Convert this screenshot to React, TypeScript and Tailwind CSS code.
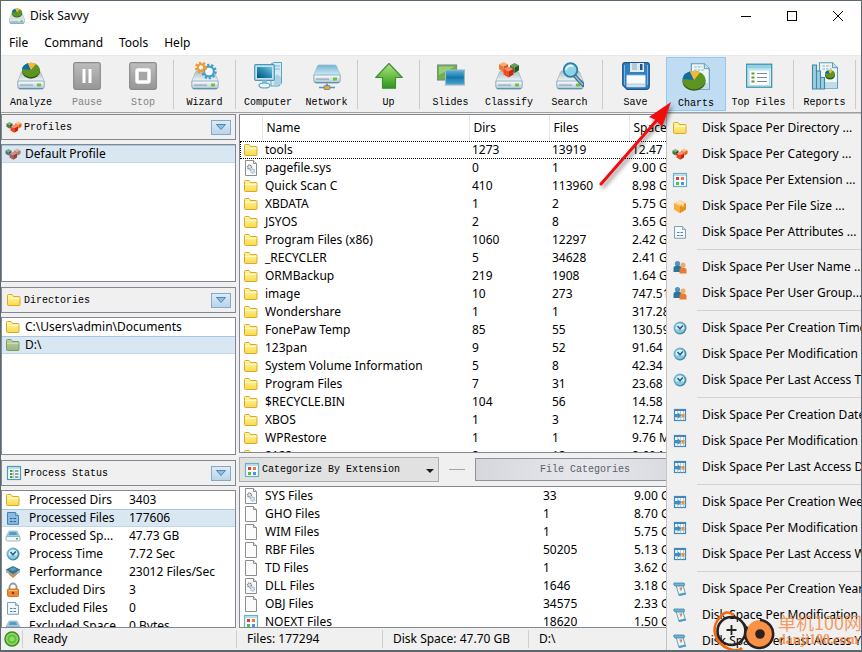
import { useId } from "react";
import type { ComponentType, ReactNode } from "react";

type IconProps = { size?: number };

function Art({ size = 28, box = 28, children }: { size?: number; box?: number; children: ReactNode }) {
  return (
    <svg width={size} height={size} viewBox={`0 0 ${box} ${box}`} className="block shrink-0" aria-hidden="true">
      {children}
    </svg>
  );
}

/* ---------- toolbar icons ---------- */

function DriveShape({ blue = false }: { blue?: boolean }) {
  const id = useId();
  return (
    <g>
      <defs>
        <linearGradient id={id + "t"} x1="0" y1="0" x2="0" y2="1">
          <stop offset="0" stopColor={blue ? "#6fb6d3" : "#a9bcc6"} />
          <stop offset="1" stopColor={blue ? "#d9f0fa" : "#f7fafc"} />
        </linearGradient>
        <linearGradient id={id + "f"} x1="0" y1="0" x2="0" y2="1">
          <stop offset="0" stopColor="#ffffff" />
          <stop offset="1" stopColor="#a9c3d1" />
        </linearGradient>
      </defs>
      <path d="M6 9h16q1 0 1.500 1L27.500 20h-27L4.500 10q.5-1 1.500-1z" fill={`url(#${id}t)`} stroke="#9db4c0" strokeWidth=".7" />
      <path d="M.8 20q0-1 1-1h24.400q1 0 1 1v4.500q0 2.500-2.500 2.500H3.300Q.8 27 .8 24.500z" fill={`url(#${id}f)`} stroke="#7ba0b4" strokeWidth=".8" />
      <rect x="3" y="22.500" width="13" height="1.200" fill="#8fa9b7" />
      <rect x="20" y="21.500" width="4" height="3" rx=".5" fill="#6cc23c" />
      <path d="M2 26.600h24" stroke="#4f8cab" strokeWidth=".9" />
    </g>
  );
}

function Pie({ cx, cy, r }: { cx: number; cy: number; r: number }) {
  const ry = r * 0.8;
  return (
    <g>
      <ellipse cx={cx} cy={cy + 1.500} rx={r} ry={ry} fill="#2f5c0c" />
      <ellipse cx={cx} cy={cy} rx={r} ry={ry} fill="#5d9423" />
      <path d={`M${cx} ${cy}L${cx - r} ${cy - 1}A${r} ${ry} 0 0 1 ${cx - r * 0.35} ${cy - ry * 0.93}z`} fill="#0f6ea8" />
      <path d={`M${cx} ${cy}L${cx - r * 0.35} ${cy - ry * 0.93}A${r} ${ry} 0 0 1 ${cx + r * 0.55} ${cy - ry * 0.83}z`} fill="#f4b73a" />
    </g>
  );
}

function AnalyzeIcon({ size }: IconProps) {
  return (
    <Art size={size}>
      <DriveShape />
      <Pie cx={14} cy={8} r={9} />
    </Art>
  );
}

function GreyTile({ children }: { children: ReactNode }) {
  const id = useId();
  return (
    <Art>
      <defs>
        <linearGradient id={id} x1="0" y1="0" x2="0" y2="1">
          <stop offset="0" stopColor="#bdbdbd" />
          <stop offset="1" stopColor="#969696" />
        </linearGradient>
      </defs>
      <rect x=".7" y=".7" width="26.600" height="26.600" rx="2" fill={`url(#${id})`} stroke="#8a8a8a" strokeWidth="1.200" />
      {children}
    </Art>
  );
}

const PauseIcon = () => (
  <GreyTile>
    <path d="M11 7v14M17 7v14" stroke="#fff" strokeWidth="3" />
  </GreyTile>
);

const StopIcon = () => (
  <GreyTile>
    <rect x="8" y="8" width="12" height="12" rx="1" fill="#a5a5a5" stroke="#fff" strokeWidth="3.400" />
  </GreyTile>
);

function Gear({ cx, cy, r, color }: { cx: number; cy: number; r: number; color: string }) {
  return (
    <g>
      <circle cx={cx} cy={cy} r={r} fill="none" stroke={color} strokeWidth="2.600" strokeDasharray="2.200 1.800" />
      <circle cx={cx} cy={cy} r={r - 1.600} fill="none" stroke={color} strokeWidth="2.200" />
      <circle cx={cx} cy={cy} r={r - 2.800} fill="#f5fbff" />
    </g>
  );
}

const WizardIcon = () => (
  <Art>
    <DriveShape />
    <Gear cx={18} cy={9.500} r={6.500} color="#3fa0d0" />
    <Gear cx={10} cy={5.500} r={4.800} color="#ef9a33" />
  </Art>
);

function ComputerIcon() {
  const id = useId();
  return (
    <Art>
      <defs>
        <linearGradient id={id} x1="0" y1="1" x2="1" y2="0">
          <stop offset="0" stopColor="#06507c" />
          <stop offset=".55" stopColor="#2c92b8" />
          <stop offset="1" stopColor="#74c7de" />
        </linearGradient>
      </defs>
      <path d="M17 2l3-1.500h7.500v21L25 24h-8z" fill="#d5ecf6" stroke="#5fa3c0" strokeWidth="1" />
      <path d="M20 4h6M20 7h6" stroke="#7cb6ce" strokeWidth="1.200" />
      <path d="M20 16l3-4 4 3v8h-7z" fill="#a9d3e4" />
      <rect x=".7" y="2.700" width="19.600" height="15.600" rx="1" fill="#c4e4f1" stroke="#4b95b5" strokeWidth="1.200" />
      <rect x="3" y="5" width="15" height="11" fill={`url(#${id})`} />
      <path d="M8 18.500h5V22H8z" fill="#8fc3d9" />
      <ellipse cx="10.500" cy="23.500" rx="5.500" ry="2.500" fill="#e3f4fb" stroke="#5fa3c0" strokeWidth="1.200" />
    </Art>
  );
}

const NetworkIcon = () => (
  <Art>
    <g transform="translate(0 -6)">
      <DriveShape blue />
    </g>
    <path d="M14 21.500v4M6 25.500h16" stroke="#5795b4" strokeWidth="1.600" />
    <rect x="11" y="23.500" width="6" height="4" rx="1" fill="#f2a13b" stroke="#4c87a5" strokeWidth=".8" />
  </Art>
);

function UpIcon() {
  const id = useId();
  return (
    <Art>
      <defs>
        <linearGradient id={id} x1="0" y1="0" x2="0" y2="1">
          <stop offset="0" stopColor="#b4e08c" />
          <stop offset=".6" stopColor="#5fb83c" />
          <stop offset="1" stopColor="#2f9420" />
        </linearGradient>
      </defs>
      <path d="M14 1.500L27.300 15.500h-6.800v10.800h-13V15.500H.7z" fill={`url(#${id})`} stroke="#3b8f2b" strokeWidth="1.100" strokeLinejoin="round" />
    </Art>
  );
}

function SlidesIcon() {
  const id = useId();
  return (
    <Art>
      <defs>
        <linearGradient id={id} x1="0" y1="0" x2="0" y2="1">
          <stop offset="0" stopColor="#5fb4da" />
          <stop offset=".5" stopColor="#1677ac" />
          <stop offset="1" stopColor="#4aa8d6" />
        </linearGradient>
      </defs>
      <rect x=".5" y="3" width="19" height="15" fill="#6bb148" stroke="#7d8d87" strokeWidth="1.200" />
      <path d="M2 4.500h16L2 13z" fill="#97cf72" />
      <rect x="8.500" y="8" width="19" height="15" fill={`url(#${id})`} stroke="#9db9c6" strokeWidth="1.200" />
    </Art>
  );
}

function Cube({ x, y, s, top, left, right }: { x: number; y: number; s: number; top: string; left: string; right: string }) {
  return (
    <g transform={`translate(${x} ${y}) scale(${s})`}>
      <path d="M0 2.500L5 0l5 2.500-5 2.500z" fill={top} />
      <path d="M0 2.500L5 5v6L0 8z" fill={left} />
      <path d="M10 2.500L5 5v6l5-3z" fill={right} />
    </g>
  );
}

const ClassifyIcon = () => (
  <Art>
    <DriveShape />
    <Cube x={4} y={0} s={0.900} top="#f9b273" left="#ef7a31" right="#d85a18" />
    <Cube x={15} y={1} s={0.900} top="#6a9c58" left="#3f7a33" right="#255a1d" />
    <Cube x={8.500} y={4.500} s={1} top="#ff8668" left="#f24a25" right="#c92a0c" />
  </Art>
);

const SearchIcon = () => (
  <Art>
    <DriveShape />
    <path d="M19 14l8 9" stroke="#3f6f8a" strokeWidth="4" strokeLinecap="round" />
    <path d="M19.500 14.500l7 8" stroke="#8fbdd4" strokeWidth="1.600" strokeLinecap="round" />
    <circle cx="14.500" cy="8" r="6.800" fill="#8fd3ea" stroke="#2f7fa3" strokeWidth="1.800" />
    <path d="M10 8a4.500 4.500 0 0 1 7-3.500" stroke="#e8f8fd" strokeWidth="1.800" fill="none" />
  </Art>
);

const SaveIcon = () => (
  <Art>
    <path d="M3 .7h22q2.300 0 2.300 2.300v21q0 3.300-3.300 3.300H5L.7 23V3Q.7.7 3 .7z" fill="#2f7fc1" stroke="#1c568c" strokeWidth="1.200" />
    <path d="M2.500 3v20M25.500 3v20" stroke="#7db5e0" strokeWidth="1" />
    <rect x="8" y="1" width="14" height="9" fill="#dceaf2" />
    <rect x="10" y="1" width="5" height="7" fill="#b9c9d3" />
    <rect x="18" y="2" width="2.500" height="6" fill="#1f5486" />
    <rect x="4.500" y="13" width="19" height="12" rx="1" fill="#f7fafc" stroke="#90b4d0" strokeWidth=".8" />
    <path d="M5 22.500h18" stroke="#b9d0e0" strokeWidth="2" />
  </Art>
);

const SheetPart = ({ x }: { x: number }) => (
  <g>
    <path d={`M${x} .7h13l5 5v20.600h-18z`} fill="#eef7fb" stroke="#5f9cb5" strokeWidth="1.100" />
    <path d={`M${x + 13} .7v5h5`} fill="#c4e1ec" stroke="#5f9cb5" strokeWidth="1" />
    <path d={`M${x + 3} 4h8M${x + 3} 7h10`} stroke="#7fb2c7" strokeWidth="1.200" strokeDasharray="2.500 1" />
    <rect x={x + 0.600} y="20" width="16.800" height="5.600" fill="#c0dce8" />
  </g>
);

const ChartsIcon = () => (
  <Art>
    <SheetPart x={9.300} />
    <Pie cx={12} cy={17} r={11.500} />
  </Art>
);

const TopFilesIcon = () => (
  <Art>
    <rect x="1.700" y="2.200" width="25" height="23" fill="#d8eef5" stroke="#2f8ba8" strokeWidth="1.200" />
    <rect x="2.500" y="3" width="23.400" height="3.500" fill="#8ed2e3" />
    <rect x="4" y="8" width="20.500" height="15.500" fill="#fbfdfe" stroke="#a9d3df" strokeWidth=".8" />
    <path d="M6.500 11.500h3M6.500 15.500h3M6.500 19.500h3" stroke="#5c9e2c" strokeWidth="2.200" />
    <path d="M12 11.500h10M12 15.500h10M12 19.500h10" stroke="#7a8a92" strokeWidth="1.200" />
  </Art>
);

const ReportsIcon = () => (
  <Art>
    <SheetPart x={8.500} />
    <Pie cx={19} cy={12} r={5} />
    <path d="M1.500 3h4v24h-4zM5.500 9h4v18h-4zM9.500 15.500h4V27h-4z" fill="#9ccde0" stroke="#3f88a6" strokeWidth="1.100" />
  </Art>
);

/* ---------- 16px icons ---------- */

function FolderIcon({ green = false }: { green?: boolean }) {
  const id = useId();
  return (
    <Art size={16} box={16}>
      <defs>
        <linearGradient id={id} x1="0" y1="0" x2="0" y2="1">
          <stop offset="0" stopColor={green ? "#c5d3a4" : "#fff7a8"} />
          <stop offset="1" stopColor={green ? "#94b283" : "#fbd94c"} />
        </linearGradient>
      </defs>
      <path d="M1.500 12.500v-9q0-1 1-1H6l1.500 2H13q1 0 1 1v7q0 1-1 1H2.500q-1 0-1-1z" fill={`url(#${id})`} stroke={green ? "#819a62" : "#d9a92c"} strokeWidth="1" />
      <path d="M2 6.500h11.500" stroke={green ? "#d2debb" : "#fffbd8"} strokeWidth=".9" />
    </Art>
  );
}
const GreenFolderIcon = () => <FolderIcon green />;

const CubesIcon = () => (
  <Art size={16} box={16}>
    <Cube x={0.500} y={3} s={0.600} top="#83b179" left="#3d7a3a" right="#1f5620" />
    <Cube x={9} y={2.500} s={0.650} top="#ffbf8a" left="#f28a3e" right="#e0651c" />
    <Cube x={4.500} y={5.500} s={0.750} top="#ff8e71" left="#ee4423" right="#c42508" />
  </Art>
);

const MutedCubesIcon = () => (
  <Art size={16} box={16}>
    <Cube x={0.500} y={3} s={0.600} top="#83a394" left="#4b7c6c" right="#355f5e" />
    <Cube x={9} y={2.500} s={0.650} top="#d9b6a6" left="#b78f80" right="#a0766f" />
    <Cube x={4.500} y={5.500} s={0.750} top="#d58f8b" left="#b65d58" right="#8f403f" />
  </Art>
);

const BlankPageIcon = () => (
  <Art size={16} box={16}>
    <path d="M2.500.5h8l3 3v12h-11z" fill="#fbfbfb" stroke="#8d8d8d" />
    <path d="M10.500.5v3h3" fill="#e2e2e2" stroke="#8d8d8d" />
  </Art>
);

const SystemPageIcon = () => (
  <Art size={16} box={16}>
    <path d="M2.500.5h8l3 3v12h-11z" fill="#fbfbfb" stroke="#8d8d8d" />
    <path d="M10.500.5v3h3" fill="#e2e2e2" stroke="#8d8d8d" />
    <circle cx="6.500" cy="7" r="2" fill="#dfe3e6" stroke="#7b858c" strokeWidth="1.300" strokeDasharray="1.200 .6" />
    <circle cx="9.500" cy="11" r="1.900" fill="#e5f2fa" stroke="#86aecb" strokeWidth="1.300" strokeDasharray="1.200 .6" />
  </Art>
);

const GridIcon = () => (
  <Art size={16} box={16}>
    <rect x="1.500" y="1.500" width="13" height="13" fill="#f6fbfd" stroke="#6bb0c4" strokeWidth="1.200" />
    <path d="M2 3h12" stroke="#a5d5e2" strokeWidth="1.500" />
    <path d="M4 5h3v3H4z" fill="#dd3c3c" />
    <path d="M9 5h3v3H9z" fill="#ef7640" />
    <path d="M4 10h3v3H4z" fill="#54c13b" />
    <path d="M9 10h3v3H9z" fill="#4d91e8" />
  </Art>
);

const StatusListIcon = () => (
  <Art size={16} box={16}>
    <rect x="1.500" y="1.500" width="13" height="13" fill="#f6fbfd" stroke="#4f9db2" strokeWidth="1.200" />
    <path d="M2 3h12" stroke="#a5d5e2" strokeWidth="1.500" />
    <path d="M4 6h2.500M4 9h2.500M4 12h2.500" stroke="#4e9c3c" strokeWidth="1.800" />
    <path d="M9 6h3.500M9 9h3.500M9 12h3.500" stroke="#8fa3ab" strokeWidth="1.800" />
    <path d="M7.700 4.500v9" stroke="#7fb8c9" strokeWidth=".8" />
  </Art>
);

function DocIcon({ selected = false }: { selected?: boolean }) {
  return (
    <Art size={16} box={16}>
      <path d="M2.500 2.500h8l3 3v8.800h-11z" fill={selected ? "#8dbbe0" : "#f1f7fa"} stroke={selected ? "#3f80b5" : "#7fa2b3"} />
      <path d="M10.500 2.500v3h3" fill="#b3d2e2" stroke={selected ? "#3f80b5" : "#7fa2b3"} strokeWidth=".8" />
      <path d="M5 8.500h2.500M8.500 8.500H11M5 11.500h2.500M8.500 11.500H11" stroke={selected ? "#2d6496" : "#5f8092"} strokeWidth="1" />
    </Art>
  );
}
const SelectedDocIcon = () => <DocIcon selected />;

const SmallDriveIcon = () => (
  <Art size={16} box={16}>
    <path d="M4 3h8l3 6H1z" fill="#a3cfe0" stroke="#8db3c4" strokeWidth=".7" />
    <path d="M5 4h6l1.500 3h-9z" fill="#4f9fbe" />
    <rect x="1" y="8.500" width="14" height="4.500" rx="1.500" fill="#eff7fa" stroke="#88a9b8" strokeWidth=".8" />
    <path d="M11 10.800h2" stroke="#57b03a" strokeWidth="1.400" />
  </Art>
);

function ClockIcon() {
  const id = useId();
  return (
    <Art size={16} box={16}>
      <defs>
        <linearGradient id={id} x1="0" y1="0" x2="1" y2="1">
          <stop offset="0" stopColor="#8cc9de" />
          <stop offset="1" stopColor="#2c789c" />
        </linearGradient>
      </defs>
      <circle cx="8" cy="8" r="6.500" fill={`url(#${id})`} />
      <circle cx="8" cy="8" r="4.600" fill="#d9f1f8" />
      <path d="M3.600 9.500a4.600 4.600 0 0 0 8.800 0z" fill="#86c8de" />
      <path d="M5.500 6L8 8.800 10.800 5.500" stroke="#205f86" strokeWidth="1.500" fill="none" />
    </Art>
  );
}

const PerformanceIcon = () => (
  <Art size={16} box={16}>
    <path d="M4 7h8v3.500L8 14l-4-3.500z" fill="#ea7b24" />
    <path d="M1 6.500l7 4 7-4v1.800l-7 4-7-4z" fill="#93a4ac" />
    <path d="M8 2l7.500 3.800L8 10 .5 5.800z" fill="#2f7592" />
    <path d="M8 3.200l4 2-4 2-4-2z" fill="#5f9fb8" />
  </Art>
);

const LockIcon = () => (
  <Art size={16} box={16}>
    <path d="M4.500 7.500V5a3.500 3.500 0 0 1 7 0v2.500" fill="none" stroke="#8e9aa0" strokeWidth="1.800" />
    <rect x="2.500" y="7" width="11" height="7.500" rx="1" fill="#f28a2c" stroke="#c9610f" strokeWidth=".8" />
    <path d="M3.500 8.500h9" stroke="#fbc07e" />
    <circle cx="8" cy="11" r="1.300" fill="#7a3a08" />
  </Art>
);

const BoxIcon = () => (
  <Art size={16} box={16}>
    <Cube x={2} y={2} s={1.200} top="#fdd48a" left="#f9ae3c" right="#e98f1b" />
    <path d="M5 3.300l6 3v2.500" stroke="#fff0cf" strokeWidth="1.200" fill="none" />
  </Art>
);

const UsersIcon = () => (
  <Art size={16} box={16}>
    <circle cx="5.500" cy="4.500" r="2.600" fill="#4f94ba" />
    <path d="M1.500 13V9q0-2.500 4-2.500T9.500 9v4z" fill="#2e759d" />
    <circle cx="11" cy="6" r="2.500" fill="#f6a76a" />
    <path d="M7.500 14.500V11q0-2.500 3.500-2.500t3.500 2.500v3.500z" fill="#ea7a30" />
  </Art>
);

const CalendarIcon = () => (
  <Art size={16} box={16}>
    <rect x="2.500" y="2.500" width="11" height="11" fill="#f7fafc" stroke="#3d88bd" strokeWidth="1.200" />
    <path d="M2.500 3h11v1h-11z" fill="#3d88bd" />
    <path d="M5.500 4v9.500M8.500 4v9.500M11.500 4v9.500M2.500 7.500h11M2.500 10.500h11" stroke="#9fb8c6" strokeWidth=".7" />
    <path d="M3 7h3V5.500L9.500 8.500 6 11.500V10H3z" fill="#3d8fc4" />
    <rect x="9.500" y="7" width="3" height="3" fill="#f5922f" />
  </Art>
);

const ScrollIcon = () => (
  <Art size={16} box={16}>
    <path d="M4 4h7l2.500 9-6.500 1.500z" fill="#eaf4f8" stroke="#6ba3ba" strokeWidth="1" />
    <path d="M2 2h10q1.200 1.500 0 3H3Q1 4 2 2z" fill="#6db4cf" stroke="#3b87a8" strokeWidth=".8" />
    <path d="M6.500 13l6.500-1.500 1.300 2-7 1.500z" fill="#4f9fbe" />
    <path d="M7.500 7h2l-.8 2.500" stroke="#dc6a2a" strokeWidth="1.200" fill="none" />
  </Art>
);

/* ---------- data ---------- */

type Tool = { label: string; icon: ComponentType; width: string; disabled?: boolean; active?: boolean };

const toolGroups: Tool[][] = [
  [
    { label: "Analyze", icon: AnalyzeIcon, width: "w-14" },
    { label: "Pause", icon: PauseIcon, width: "w-14", disabled: true },
    { label: "Stop", icon: StopIcon, width: "w-14", disabled: true },
  ],
  [{ label: "Wizard", icon: WizardIcon, width: "w-[57px]" }],
  [
    { label: "Computer", icon: ComputerIcon, width: "w-[60px]" },
    { label: "Network", icon: NetworkIcon, width: "w-[57px]" },
  ],
  [{ label: "Up", icon: UpIcon, width: "w-[57px]" }],
  [
    { label: "Slides", icon: SlidesIcon, width: "w-[57px]" },
    { label: "Classify", icon: ClassifyIcon, width: "w-[60px]" },
    { label: "Search", icon: SearchIcon, width: "w-[61px]" },
  ],
  [
    { label: "Save", icon: SaveIcon, width: "w-[61px]" },
    { label: "Charts", icon: ChartsIcon, width: "w-[60px]", active: true },
    { label: "Top Files", icon: TopFilesIcon, width: "w-[65px]" },
  ],
  [{ label: "Reports", icon: ReportsIcon, width: "w-[57px]" }],
];

const entries: [string, string, string, string][] = [
  ["tools", "1273", "13919", "12.47 GB"],
  ["pagefile.sys", "0", "1", "9.00 GB"],
  ["Quick Scan C", "410", "113960", "8.98 GB"],
  ["XBDATA", "1", "2", "5.75 GB"],
  ["JSYOS", "2", "8", "3.65 GB"],
  ["Program Files (x86)", "1060", "12297", "2.42 GB"],
  ["_RECYCLER", "5", "34628", "2.41 GB"],
  ["ORMBackup", "219", "1908", "1.64 GB"],
  ["image", "10", "273", "747.51 MB"],
  ["Wondershare", "1", "1", "317.28 MB"],
  ["FonePaw Temp", "85", "55", "130.59 MB"],
  ["123pan", "9", "52", "91.64 MB"],
  ["System Volume Information", "5", "8", "42.34 MB"],
  ["Program Files", "7", "31", "23.68 MB"],
  ["$RECYCLE.BIN", "104", "56", "14.58 MB"],
  ["XBOS", "1", "3", "12.74 MB"],
  ["WPRestore", "1", "1", "9.76 MB"],
  ["2123", "2", "12", "8.60 MB"],
];

const categories: [ComponentType, string, string, string][] = [
  [SystemPageIcon, "SYS Files", "33", "9.00 GB"],
  [BlankPageIcon, "GHO Files", "1", "8.70 GB"],
  [BlankPageIcon, "WIM Files", "1", "5.75 GB"],
  [BlankPageIcon, "RBF Files", "50205", "5.13 GB"],
  [BlankPageIcon, "TD Files", "1", "3.62 GB"],
  [SystemPageIcon, "DLL Files", "1646", "3.18 GB"],
  [BlankPageIcon, "OBJ Files", "34575", "2.33 GB"],
  [GridIcon, "NOEXT Files", "18620", "1.50 GB"],
];

const stats: [ComponentType, string, string][] = [
  [FolderIcon, "Processed Dirs", "3403"],
  [SelectedDocIcon, "Processed Files", "177606"],
  [SmallDriveIcon, "Processed Sp...", "47.73 GB"],
  [ClockIcon, "Process Time", "7.72 Sec"],
  [PerformanceIcon, "Performance", "23012 Files/Sec"],
  [LockIcon, "Excluded Dirs", "3"],
  [DocIcon, "Excluded Files", "0"],
  [SmallDriveIcon, "Excluded Space", "0 Bytes"],
];

const menuGroups: [ComponentType, string][][] = [
  [
    [FolderIcon, "Directory ..."],
    [CubesIcon, "Category ..."],
    [GridIcon, "Extension ..."],
    [BoxIcon, "File Size ..."],
    [DocIcon, "Attributes ..."],
  ],
  [
    [UsersIcon, "User Name ..."],
    [UsersIcon, "User Group..."],
  ],
  [
    [ClockIcon, "Creation Time ..."],
    [ClockIcon, "Modification Time ..."],
    [ClockIcon, "Last Access Time ..."],
  ],
  [
    [CalendarIcon, "Creation Date ..."],
    [CalendarIcon, "Modification Date ..."],
    [CalendarIcon, "Last Access Date ..."],
  ],
  [
    [CalendarIcon, "Creation Week ..."],
    [CalendarIcon, "Modification Week ..."],
    [CalendarIcon, "Last Access Week ..."],
  ],
  [
    [ScrollIcon, "Creation Year ..."],
    [ScrollIcon, "Modification Year ..."],
    [ScrollIcon, "Last Access Year ..."],
  ],
];

/* ---------- pieces ---------- */

function PanelHeader({ icon: Icon, title }: { icon: ComponentType; title: string }) {
  return (
    <div className="flex h-[26px] shrink-0 items-center border border-[#828790] pr-1 pl-1">
      <Icon />
      <h2 className="ml-[2px] flex-1 pt-[2px] font-['Liberation_Mono',monospace] text-[10px]">{title}</h2>
      <button
        type="button"
        aria-label={`${title} options`}
        className="flex h-[15px] w-5 items-center justify-center border border-[#86a9c4] bg-linear-to-b from-[#dcebf6] to-[#b9d5e9]"
      >
        <svg width="10" height="6" viewBox="0 0 10 6" aria-hidden="true">
          <path d="M.5.500h9L5 5.500z" fill="#8fbfe0" stroke="#4e86ad" />
        </svg>
      </button>
    </div>
  );
}

function ListBox({ children }: { children: ReactNode }) {
  return <div className="min-h-0 flex-1 overflow-hidden border border-[#828790] bg-white">{children}</div>;
}

const selectedRow = "bg-[#d9e7f3] shadow-[inset_0_1px_0_#a9c8e0,inset_0_-1px_0_#c0d8ea]";

function ItemRow({ icon: Icon, text, selected = false }: { icon: ComponentType; text: string; selected?: boolean }) {
  return (
    <li className={`flex h-[18px] items-center gap-1 pl-[3px] ${selected ? selectedRow : ""}`}>
      <Icon />
      <span>{text}</span>
    </li>
  );
}

function Toolbar() {
  return (
    <div role="toolbar" className="flex h-14 shrink-0 pl-[2px]">
      {toolGroups.map((group, index) => (
        <div key={index} className="flex">
          {group.map(({ label, icon: Icon, width, disabled, active }) => (
            <button
              key={label}
              type="button"
              disabled={disabled}
              className={`mt-px flex h-[54px] shrink-0 flex-col items-center gap-[6px] font-['Liberation_Mono',monospace] text-[10px] leading-[14px] whitespace-nowrap disabled:text-[#838383] ${width} ${
                active ? "border border-[#90c8f6] bg-[#c0dcf3] pt-[5px]" : "pt-[5px]"
              }`}
            >
              <Icon />
              {label}
            </button>
          ))}
          <span className="mx-[2px] mt-1 h-[49px] w-px bg-[#cbcbcb]" />
        </div>
      ))}
    </div>
  );
}

function EntriesTable() {
  return (
    <div className="min-h-0 flex-1 overflow-hidden border border-[#828790] bg-white">
      <table className="w-full table-fixed border-collapse text-left whitespace-nowrap">
        <colgroup>
          <col className="w-[22px]" />
          <col className="w-[207px]" />
          <col className="w-20" />
          <col className="w-20" />
          <col />
        </colgroup>
        <thead>
          <tr className="h-[26px]">
            <th className="border-r border-[#e5e5e5]" aria-label="Type" />
            <th className="border-r border-[#e5e5e5] pl-1 font-normal">Name</th>
            <th className="border-r border-[#e5e5e5] pl-1 font-normal">Dirs</th>
            <th className="border-r border-[#e5e5e5] pl-1 font-normal">Files</th>
            <th className="pl-1 font-normal">Space</th>
          </tr>
        </thead>
        <tbody>
          {entries.map(([name, dirs, files, space], index) => (
            <tr key={name} className={`h-[18px] ${index === 0 ? "outline-1 -outline-offset-1 outline-black outline-dotted" : ""}`}>
              <td className="pl-[3px]">{name === "pagefile.sys" ? <SystemPageIcon /> : <FolderIcon />}</td>
              <td className="pl-[3px]">{name}</td>
              <td className="pl-[3px]">{dirs}</td>
              <td className="pl-[3px]">{files}</td>
              <td className="pl-[3px]">{space}</td>
            </tr>
          ))}
        </tbody>
      </table>
    </div>
  );
}

function CategoryBar() {
  return (
    <div className="my-1 flex h-[25px] shrink-0 items-center">
      <div className="relative h-full w-[200px]">
        <label htmlFor="categorize" className="sr-only">
          Categorize files
        </label>
        <select
          id="categorize"
          className="h-full w-full appearance-none border border-[#adadad] bg-[#e1e1e1] pl-[22px] font-['Liberation_Mono',monospace] text-[10px]"
        >
          <option>Categorize By Extension</option>
        </select>
        <div className="pointer-events-none absolute inset-y-0 left-[5px] flex items-center">
          <GridIcon />
        </div>
        <svg width="8" height="4" viewBox="0 0 8 4" className="pointer-events-none absolute top-[12px] right-[5px]" aria-hidden="true">
          <path d="M0 0h8L4 4z" fill="#1c1c1c" />
        </svg>
      </div>
      <span className="mx-[10px] h-px w-4 shrink-0 bg-[#a5a5a5]" />
      <button
        type="button"
        className="h-[23px] w-[220px] border border-[#8f9299] bg-linear-to-r from-[#d5d7dc] via-[#e6e8ee] to-[#d5d7dc] font-['Liberation_Mono',monospace] text-[10px] text-[#5c5f66]"
      >
        File Categories
      </button>
    </div>
  );
}

function CategoriesTable() {
  return (
    <div className="h-[142px] shrink-0 overflow-hidden border border-[#828790] bg-white">
      <table className="w-full table-fixed border-collapse text-left whitespace-nowrap">
        <colgroup>
          <col className="w-[22px]" />
          <col className="w-[278px]" />
          <col className="w-[91px]" />
          <col />
        </colgroup>
        <tbody>
          {categories.map(([Icon, name, count, space]) => (
            <tr key={name} className="h-[18px]">
              <td className="pl-[3px]">
                <Icon />
              </td>
              <td className="pl-[3px]">{name}</td>
              <td className="pl-[3px]">{count}</td>
              <td className="pl-[3px]">{space}</td>
            </tr>
          ))}
        </tbody>
      </table>
    </div>
  );
}

function ChartsMenu() {
  return (
    <div role="menu" className="absolute top-[112px] right-0 bottom-0 left-[665px] overflow-hidden border-t border-l border-[#c4c4c4] bg-[#f0f0f0] pt-px">
      {menuGroups.map((group, index) => (
        <div key={index}>
          {index > 0 && <div className="my-1 ml-[30px] h-px bg-[#d2d2d2]" />}
          {group.map(([Icon, text]) => (
            <button key={text} type="button" role="menuitem" className="flex h-[26px] items-center gap-[14px] pl-[5px] whitespace-nowrap">
              <Icon />
              <span>Disk Space Per {text}</span>
            </button>
          ))}
        </div>
      ))}
    </div>
  );
}

function Arrow() {
  return (
    <svg width="90" height="100" viewBox="0 0 90 100" className="pointer-events-none absolute top-[94px] left-[593px]" aria-hidden="true">
      <g className="drop-shadow-[2px_3px_2px_rgba(0,0,0,0.45)]">
        <path d="M7 89L63 25" stroke="#f20d0d" strokeWidth="3" strokeLinecap="round" />
        <path d="M77 7L55 22l7 3 6 7z" fill="#f20d0d" />
      </g>
    </svg>
  );
}

function Watermark() {
  return (
    <div className="pointer-events-none absolute top-[607px] left-[711px] flex items-start whitespace-nowrap">
      <svg width="66" height="44" viewBox="0 0 66 44" className="shrink-0" aria-hidden="true">
        <path d="M22 7Q14 1 8 9 1 17 3 26q4 13 18 16 6 1 9-2" fill="none" stroke="#f26a10" strokeWidth="2.600" />
        <circle cx="19.500" cy="23" r="14" fill="none" stroke="#2b2220" strokeWidth="2.600" />
        <path d="M14.500 22h10M19.500 17v10" stroke="#2b2220" strokeWidth="1.800" />
        <path d="M32 16q2 5 5 4" fill="none" stroke="#2b2220" strokeWidth="2.400" />
        <circle cx="48" cy="26" r="14" fill="#f99247" />
        <path d="M35 19A14 14 0 1 0 48 12" fill="none" stroke="#2b2220" strokeWidth="2.600" />
        <circle cx="48" cy="26" r="4.800" fill="#2b2220" />
      </svg>
      <div className="flex flex-col pt-1 font-['Noto_Sans_CJK_SC',sans-serif] text-[#f58a45]/85">
        <span className="text-[18px] leading-[20px]">单机100网</span>
        <span className="font-['Liberation_Serif',serif] text-[14px] leading-[16px] font-bold">danji100.com</span>
      </div>
    </div>
  );
}

export default function App() {
  return (
    <div className="relative flex h-screen w-full flex-col overflow-hidden border-x border-t border-b-2 border-[#5b6870] bg-[#f0f0f0] font-['Noto_Sans','Open_Sans',sans-serif] text-[12px] leading-[18px] text-black">
      <header className="flex h-[30px] shrink-0 items-center bg-white pl-2">
        <AnalyzeIcon size={16} />
        <h1 className="ml-[5px] flex-1">Disk Savvy</h1>
        <button type="button" aria-label="Minimize" className="flex w-[46px] justify-center">
          <svg width="10" height="10" viewBox="0 0 10 10" stroke="#000" aria-hidden="true">
            <path d="M0 5.500h10" />
          </svg>
        </button>
        <button type="button" aria-label="Maximize" className="flex w-[46px] justify-center">
          <svg width="10" height="10" viewBox="0 0 10 10" stroke="#000" fill="none" aria-hidden="true">
            <rect x=".5" y=".5" width="9" height="9" />
          </svg>
        </button>
        <button type="button" aria-label="Close" className="flex w-[46px] justify-center">
          <svg width="10" height="10" viewBox="0 0 10 10" stroke="#000" aria-hidden="true">
            <path d="M0 0l10 10M10 0L0 10" />
          </svg>
        </button>
      </header>
      <nav className="flex h-[25px] shrink-0 items-center gap-4 border-b border-[#e8e8e8] bg-white pl-2">
        {["File", "Command", "Tools", "Help"].map((label) => (
          <button key={label} type="button">
            {label}
          </button>
        ))}
      </nav>
      <Toolbar />
      <main className="flex min-h-0 flex-1 gap-[3px] border-t border-[#a0a0a0] pt-px">
        <aside className="flex w-[235px] shrink-0 flex-col">
          <PanelHeader icon={CubesIcon} title="Profiles" />
          <section className="mt-1 mb-[5px] flex min-h-0 flex-1 flex-col">
            <ListBox>
              <ul>
                <ItemRow icon={MutedCubesIcon} text="Default Profile" selected />
              </ul>
            </ListBox>
          </section>
          <PanelHeader icon={FolderIcon} title="Directories" />
          <section className="mt-1 mb-[5px] flex min-h-0 flex-1 flex-col">
            <ListBox>
              <ul>
                <ItemRow icon={FolderIcon} text="C:\Users\admin\Documents" />
                <ItemRow icon={GreenFolderIcon} text="D:\" selected />
              </ul>
            </ListBox>
          </section>
          <PanelHeader icon={StatusListIcon} title="Process Status" />
          <section className="mt-1 flex min-h-0 flex-1 flex-col">
            <ListBox>
              <table className="w-full table-fixed border-collapse text-left whitespace-nowrap">
                <colgroup>
                  <col className="w-[27px]" />
                  <col className="w-[100px]" />
                  <col />
                </colgroup>
                <tbody>
                  {stats.map(([Icon, name, value], index) => (
                    <tr key={name} className={`h-[18px] ${index === 1 ? selectedRow : ""}`}>
                      <td className="pl-[3px]">
                        <Icon />
                      </td>
                      <td>{name}</td>
                      <td>{value}</td>
                    </tr>
                  ))}
                </tbody>
              </table>
            </ListBox>
          </section>
        </aside>
        <div className="flex min-w-0 flex-1 flex-col">
          <EntriesTable />
          <CategoryBar />
          <CategoriesTable />
        </div>
      </main>
      <footer className="flex h-[22px] shrink-0 items-center">
        <div className="flex w-[21px] justify-center">
          <svg width="16" height="16" viewBox="0 0 16 16" aria-hidden="true">
            <circle cx="8" cy="8" r="7" fill="#8bd860" stroke="#3d8a2c" strokeWidth="1.500" />
            <circle cx="8" cy="8" r="4.500" fill="#5fbf38" />
            <circle cx="8" cy="8" r="2.500" fill="#8fdd66" />
          </svg>
        </div>
        <span className="w-[214px] border-l border-[#cfcfcf] pl-[10px]">Ready</span>
        <span className="w-[146px] border-l border-[#cfcfcf] pl-[10px]">Files: 177294</span>
        <span className="w-[146px] border-l border-[#cfcfcf] pl-[10px]">Disk Space: 47.70 GB</span>
        <span className="flex-1 border-l border-[#cfcfcf] pl-[10px]">D:\</span>
      </footer>
      <ChartsMenu />
      <Arrow />
      <Watermark />
    </div>
  );
}
